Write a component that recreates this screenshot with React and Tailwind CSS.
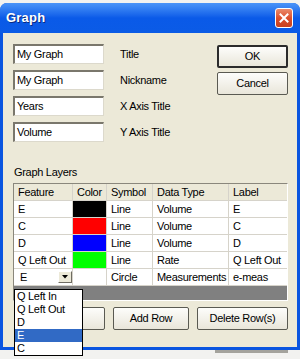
import React from 'react'

const font = "font-['Liberation_Sans',Arial,sans-serif]"

const fields = [
    { value: 'My Graph', label: 'Title' },
    { value: 'My Graph', label: 'Nickname' },
    { value: 'Years', label: 'X Axis Title' },
    { value: 'Volume', label: 'Y Axis Title' },
]

const layers = [
    { feature: 'E', color: 'bg-black', symbol: 'Line', type: 'Volume', label: 'E' },
    { feature: 'C', color: 'bg-[#ff0000]', symbol: 'Line', type: 'Volume', label: 'C' },
    { feature: 'D', color: 'bg-[#0000ff]', symbol: 'Line', type: 'Volume', label: 'D' },
    { feature: 'Q Left Out', color: 'bg-[#00ff00]', symbol: 'Line', type: 'Rate', label: 'Q Left Out' },
]

const options = ['Q Left In', 'Q Left Out', 'D', 'E', 'C']

const XpButton = ({ children, className = '', def = false }) => (
    <div
        className={`h-[23px] flex items-center justify-center rounded-[2px] bg-gradient-to-b from-[#fdfdfb] to-[#e9e6da] text-[11px] text-black ${def ? 'border-2 border-[#2b2b2b]' : 'border border-[#5a5a52]'} ${className}`}
    >
        {children}
    </div>
)

const Cell = ({ w, children, className = '' }) => (
    <div className={`${w} h-full shrink-0 border-r border-[#d6d3ca] pl-[4px] flex items-center overflow-hidden whitespace-nowrap ${className}`}>
        {children}
    </div>
)

export default function App() {
    return (
        <div className={`relative w-[300px] h-[359px] overflow-hidden bg-[#f2f2f0] ${font} tracking-[-0.3px]`}>
            {/* window */}
            <div className="mt-[3px] h-[347px] rounded-t-[7px] bg-[#0a55e0] px-[3px] pb-[3px] flex flex-col">
                {/* title bar */}
                <div className="h-[30px] shrink-0 -mx-[3px] px-[6px] rounded-t-[7px] bg-gradient-to-b from-[#4a94f8] via-[#0a5ae8] to-[#0b5be6] flex items-center justify-between">
                    <span className="text-white font-bold text-[13px] tracking-[0.2px] [text-shadow:1px_1px_0_#0a2a80]">Graph</span>
                    <div className="w-[18px] h-[20px] mr-[1px] rounded-[3px] border border-white bg-gradient-to-b from-[#e98a6b] via-[#dd4f2c] to-[#c7401e] flex items-center justify-center">
                        <svg width="10" height="10" viewBox="0 0 10 10">
                            <path d="M1.5 1.5 L8.5 8.5 M8.5 1.5 L1.5 8.5" stroke="white" strokeWidth="2" strokeLinecap="square" />
                        </svg>
                    </div>
                </div>

                {/* content */}
                <div className="flex-1 bg-[#ece9d8] pt-[11px] pl-[10px] pr-[9px] text-[11px] text-black">
                    <div className="flex justify-between">
                        <div className="flex flex-col gap-[6px]">
                            {fields.map((f, i) => (
                                <div key={i} className="flex items-center h-[20px]">
                                    <div className="w-[91px] h-[20px] bg-white border-t-2 border-l-2 border-b border-r border-t-[#7a776c] border-l-[#7a776c] border-b-[#dcd9cc] border-r-[#dcd9cc] pl-[2px] flex items-center">
                                        {f.value}
                                    </div>
                                    <span className="ml-[16px]">{f.label}</span>
                                </div>
                            ))}
                        </div>
                        <div className="flex flex-col gap-[4px] mt-[1px]">
                            <XpButton def className="w-[71px]">OK</XpButton>
                            <XpButton className="w-[71px]">Cancel</XpButton>
                        </div>
                    </div>

                    <div className="mt-[24px] leading-[13px] pl-[1px]">Graph Layers</div>

                    {/* table */}
                    <div className="mt-[4px] w-[275px] border-t border-l border-[#8a877c] border-b border-r border-b-[#ffffff] border-r-[#ffffff]">
                        <div className="h-[17px] flex bg-[#ece9d8] border-b border-[#d6d3ca]">
                            <Cell w="w-[59px]">Feature</Cell>
                            <Cell w="w-[34px]">Color</Cell>
                            <Cell w="w-[46px]">Symbol</Cell>
                            <Cell w="w-[76px]">Data Type</Cell>
                            <Cell w="w-[58px]" className="border-r-0">Label</Cell>
                        </div>
                        {layers.map((r, i) => (
                            <div key={i} className="h-[17px] flex bg-white border-b border-[#d6d3ca]">
                                <Cell w="w-[59px]">{r.feature}</Cell>
                                <div className="w-[34px] h-full shrink-0 border-r border-[#d6d3ca]">
                                    <div className={`w-full h-full ${r.color}`} />
                                </div>
                                <Cell w="w-[46px]">{r.symbol}</Cell>
                                <Cell w="w-[76px]">{r.type}</Cell>
                                <Cell w="w-[58px]" className="border-r-0">{r.label}</Cell>
                            </div>
                        ))}
                        <div className="h-[17px] flex bg-white border-b border-[#d6d3ca]">
                            <div className="w-[59px] h-full shrink-0 border-r border-[#d6d3ca] pl-[2px] flex items-center">
                                <div className="w-[56px] h-[16px] flex items-center justify-between">
                                    <span className="pl-[4px]">E</span>
                                    <div className="w-[14px] h-[12px] bg-[#ece9d8] border border-t-white border-l-white border-b-[#6f6c62] border-r-[#6f6c62] flex items-center justify-center">
                                        <svg width="6" height="4" viewBox="0 0 6 4">
                                            <path d="M0 0 H6 L3 3.5 Z" fill="black" />
                                        </svg>
                                    </div>
                                </div>
                            </div>
                            <div className="w-[34px] h-full shrink-0 border-r border-[#d6d3ca]" />
                            <Cell w="w-[46px]">Circle</Cell>
                            <Cell w="w-[76px]">Measurements</Cell>
                            <Cell w="w-[58px]" className="border-r-0">e-meas</Cell>
                        </div>
                        <div className="h-[14px] bg-[#808080]" />
                    </div>

                    {/* row buttons */}
                    <div className="mt-[6px] flex justify-end gap-[8px] w-[275px]">
                        <XpButton className="w-[76px]">Copy</XpButton>
                        <XpButton className="w-[76px]">Add Row</XpButton>
                        <XpButton className="w-[91px]">Delete Row(s)</XpButton>
                    </div>
                </div>
            </div>

            {/* shadow remnant below the frame */}
            <div className="absolute left-[215px] top-[350px] w-[73px] h-[3px] bg-[#a4a39d]" />

            {/* open combo list */}
            <div className="absolute left-[14px] top-[289px] w-[69px] border border-black bg-white text-[11px] text-black">
                {options.map((o) => (
                    <div key={o} className={`h-[13px] leading-[13px] pl-[2px] ${o === 'E' ? 'bg-[#316ac5] text-white' : ''}`}>
                        {o}
                    </div>
                ))}
            </div>
        </div>
    )
}
